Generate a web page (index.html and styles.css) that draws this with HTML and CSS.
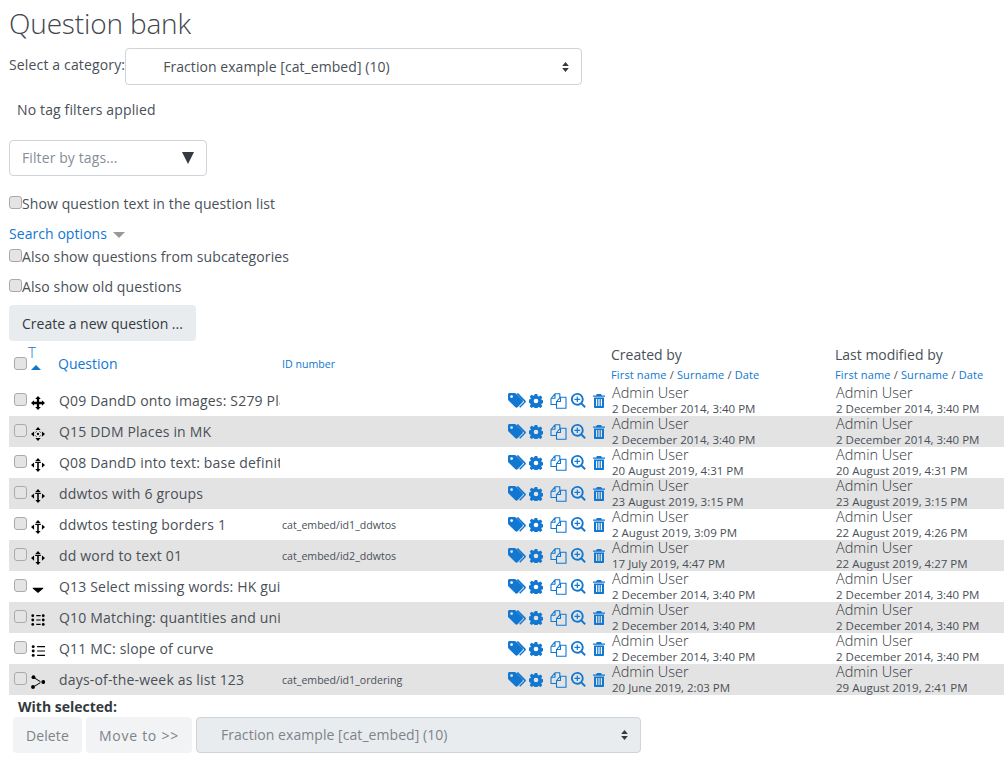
FILE: index.html
```html
<!DOCTYPE html>
<html lang="en">
<head>
<meta charset="utf-8">
<title>Question bank</title>
<link rel="stylesheet" href="styles.css">
</head>
<body>
<svg class="defs" width="0" height="0" aria-hidden="true">
  <symbol id="i-tags" viewBox="0 0 18 16"><path d="M0 1.600C0 .7.7 0 1.600 0h5c.5 0 1 .2 1.300.5l6.600 6.600c.6.6.6 1.600 0 2.200l-4.900 4.900c-.6.6-1.600.6-2.200 0L.5 7.600C.2 7.300 0 6.800 0 6.300z M3.600 2.200a1.400 1.400 0 1 0 0 2.800 1.400 1.400 0 0 0 0-2.800z" fill-rule="evenodd"/><path d="M10 0l7.400 7.400c.6.600.6 1.600 0 2.200l-5.200 5.200-1-1 5-5L8.600 1z"/></symbol>
  <symbol id="i-cog" viewBox="0 0 14 14"><path fill-rule="evenodd" d="M5.700 0h2.600l.4 1.900 1.100.5 1.700-1 1.800 1.800-1 1.700.5 1.100 1.900.4v2.600l-1.900.4-.5 1.100 1 1.700-1.800 1.800-1.700-1-1.100.5-.4 1.900H5.700l-.4-1.900-1.100-.5-1.700 1-1.800-1.800 1-1.700-.5-1.100L-.6 8.300V5.700l1.900-.4.5-1.100-1-1.700L2.600.7l1.700 1 1.100-.5z M7 4.700a2.300 2.300 0 1 0 0 4.600 2.300 2.300 0 0 0 0-4.600z"/></symbol>
  <symbol id="i-copy" viewBox="0 0 17 16"><path fill="none" stroke="currentColor" stroke-width="1.100" stroke-linejoin="round" d="M6.500 11.500H1V5.500L5 .8h4.800v3.400 M5 .8v4.500H1 M6.500 11.500V8.500l4-4.300H16v11H6.500z M10.500 4.200v4.300H6.500"/></symbol>
  <symbol id="i-zoom" viewBox="0 0 15 15"><path fill-rule="evenodd" d="M6.300 0a6.300 6.300 0 0 1 5 10.100l3.500 3.500-1.300 1.300-3.500-3.500A6.300 6.300 0 1 1 6.300 0z M6.300 1.800a4.500 4.500 0 1 0 0 9 4.500 4.500 0 0 0 0-9z"/><path d="M5.700 3.500h1.200v2.200h2.200v1.200H6.900v2.200H5.700V6.900H3.500V5.700h2.200z"/></symbol>
  <symbol id="i-trash" viewBox="0 0 12 14"><path fill-rule="evenodd" d="M4 0h4l1 1.500h3v1.300H0V1.500h3z M1 3.500h10V13c0 .6-.4 1-1 1H2c-.6 0-1-.4-1-1z M3 5v7h1.200V5z M5.400 5v7h1.200V5z M7.800 5v7H9V5z"/></symbol>
  <symbol id="i-move" viewBox="0 0 16 16"><path d="M8 0l3.200 3.500H9.300v3.200h3.200V4.800L16 8l-3.500 3.200V9.300H9.300v3.200h1.900L8 16l-3.200-3.500h1.900V9.300H3.500v1.900L0 8l3.500-3.200v1.900h3.200V3.500H4.800z"/></symbol>
  <symbol id="i-marker" viewBox="0 0 16 16"><path d="M8 0l3 3.500H5zM8 16l-3-3.500h6zM0 8l3.500-3v6zM16 8l-3.500 3V5z"/><circle cx="8" cy="8" r="1.300"/><path d="M5 6.300L6.300 5M11 6.300L9.700 5M5 9.700L6.300 11M11 9.700L9.700 11" stroke="#000" stroke-width="1"/></symbol>
  <symbol id="i-wtos" viewBox="0 0 16 16"><path d="M8 0l3 3.500H5zM8 16l-3-3.500h6zM0 8l3.500-3v6zM16 8l-3.500 3V5z"/><path d="M4.800 4.300h6.400v1.400H8.900v7H7.100v-7H4.800z"/></symbol>
  <symbol id="i-select" viewBox="0 0 16 16"><path d="M2 6.500h12v1L8 12.500l-6-5z"/></symbol>
  <symbol id="i-match" viewBox="0 0 16 16"><circle cx="2" cy="3" r="1.600"/><circle cx="2" cy="8" r="1.600"/><circle cx="2" cy="13" r="1.600"/><circle cx="14" cy="3" r="1.600"/><circle cx="14" cy="8" r="1.600"/><circle cx="14" cy="13" r="1.600"/><path d="M6 2.400h5v1.200H6zM6 7.400h5v1.200H6zM6 12.400h5v1.200H6z"/></symbol>
  <symbol id="i-choice" viewBox="0 0 16 16"><circle cx="2.500" cy="3" r="1.700"/><circle cx="2.500" cy="8" r="1.700"/><circle cx="2.500" cy="13" r="1.700"/><path d="M7 2.400h9v1.200H7zM7 7.400h9v1.200H7zM7 12.400h9v1.200H7z"/></symbol>
  <symbol id="i-order" viewBox="0 0 16 16"><circle cx="2.800" cy="2.500" r="2.200"/><circle cx="2.300" cy="13.700" r="2.200"/><circle cx="14" cy="8" r="2.200"/><path d="M4 2.800l7 4.300-.5.900-7-4.300zM3.500 12.500l7-4.200.5.900-7 4.200z"/></symbol>
  <symbol id="i-updown" viewBox="0 0 8 12"><path d="M4 0l4 4.700H0zM4 12L0 7.300h8z"/></symbol>
</svg>

<main class="page">
  <h1 class="title">Question bank</h1>

  <div class="cat-row">
    <span class="cat-label">Select a category:</span>
    <div class="select cat-select">
      <span>Fraction example [cat_embed] (10)</span>
      <svg class="updown"><use href="#i-updown"/></svg>
    </div>
  </div>

  <p class="no-tags">No tag filters applied</p>

  <div class="tag-filter">
    <span>Filter by tags...</span>
    <span class="tag-caret"></span>
  </div>

  <label class="check-line first"><span class="cb"></span>Show question text in the question list</label>

  <div class="search-options"><a href="#">Search options</a><span class="search-caret"></span></div>
  <label class="check-line sub"><span class="cb"></span>Also show questions from subcategories</label>
  <label class="check-line old"><span class="cb"></span>Also show old questions</label>

  <div class="create-wrap"><button class="btn" type="button">Create a new question ...</button></div>

  <table class="qtable">
    <colgroup>
      <col class="c-check"><col class="c-type"><col class="c-name"><col class="c-id"><col class="c-act"><col class="c-created"><col class="c-mod">
    </colgroup>
    <thead>
      <tr>
        <th class="th-check"><span class="cb"></span></th>
        <th class="th-type"><a href="#">T</a><span class="sort-up"></span></th>
        <th class="th-q"><a href="#">Question</a></th>
        <th class="th-id"><a href="#">ID number</a></th>
        <th></th>
        <th class="th-who"><div class="who-title">Created by</div><div class="who-sub"><a href="#">First name</a> / <a href="#">Surname</a> / <a href="#">Date</a></div></th>
        <th class="th-who"><div class="who-title">Last modified by</div><div class="who-sub"><a href="#">First name</a> / <a href="#">Surname</a> / <a href="#">Date</a></div></th>
      </tr>
    </thead>
    <tbody>
      <tr>
        <td class="t-check"><span class="cb"></span></td><td class="t-type"><svg class="qt"><use href="#i-move"/></svg></td>
        <td class="t-name"><div class="clip">Q09 DandD onto images: S279 Plate tectonics</div></td><td class="t-id"></td>
        <td class="t-act"><div class="acts"><svg class="a-tags"><use href="#i-tags"/></svg><svg class="a-cog"><use href="#i-cog"/></svg><svg class="a-copy"><use href="#i-copy"/></svg><svg class="a-zoom"><use href="#i-zoom"/></svg><svg class="a-trash"><use href="#i-trash"/></svg></div></td>
        <td class="t-who"><div class="who">Admin User</div><div class="when">2 December 2014, 3:40 PM</div></td>
        <td class="t-who"><div class="who">Admin User</div><div class="when">2 December 2014, 3:40 PM</div></td>
      </tr>
      <tr>
        <td class="t-check"><span class="cb"></span></td><td class="t-type"><svg class="qt"><use href="#i-marker"/></svg></td>
        <td class="t-name"><div class="clip">Q15 DDM Places in MK</div></td><td class="t-id"></td>
        <td class="t-act"><div class="acts"><svg class="a-tags"><use href="#i-tags"/></svg><svg class="a-cog"><use href="#i-cog"/></svg><svg class="a-copy"><use href="#i-copy"/></svg><svg class="a-zoom"><use href="#i-zoom"/></svg><svg class="a-trash"><use href="#i-trash"/></svg></div></td>
        <td class="t-who"><div class="who">Admin User</div><div class="when">2 December 2014, 3:40 PM</div></td>
        <td class="t-who"><div class="who">Admin User</div><div class="when">2 December 2014, 3:40 PM</div></td>
      </tr>
      <tr>
        <td class="t-check"><span class="cb"></span></td><td class="t-type"><svg class="qt"><use href="#i-wtos"/></svg></td>
        <td class="t-name"><div class="clip">Q08 DandD into text: base definitions</div></td><td class="t-id"></td>
        <td class="t-act"><div class="acts"><svg class="a-tags"><use href="#i-tags"/></svg><svg class="a-cog"><use href="#i-cog"/></svg><svg class="a-copy"><use href="#i-copy"/></svg><svg class="a-zoom"><use href="#i-zoom"/></svg><svg class="a-trash"><use href="#i-trash"/></svg></div></td>
        <td class="t-who"><div class="who">Admin User</div><div class="when">20 August 2019, 4:31 PM</div></td>
        <td class="t-who"><div class="who">Admin User</div><div class="when">20 August 2019, 4:31 PM</div></td>
      </tr>
      <tr>
        <td class="t-check"><span class="cb"></span></td><td class="t-type"><svg class="qt"><use href="#i-wtos"/></svg></td>
        <td class="t-name"><div class="clip">ddwtos with 6 groups</div></td><td class="t-id"></td>
        <td class="t-act"><div class="acts"><svg class="a-tags"><use href="#i-tags"/></svg><svg class="a-cog"><use href="#i-cog"/></svg><svg class="a-copy"><use href="#i-copy"/></svg><svg class="a-zoom"><use href="#i-zoom"/></svg><svg class="a-trash"><use href="#i-trash"/></svg></div></td>
        <td class="t-who"><div class="who">Admin User</div><div class="when">23 August 2019, 3:15 PM</div></td>
        <td class="t-who"><div class="who">Admin User</div><div class="when">23 August 2019, 3:15 PM</div></td>
      </tr>
      <tr>
        <td class="t-check"><span class="cb"></span></td><td class="t-type"><svg class="qt"><use href="#i-wtos"/></svg></td>
        <td class="t-name"><div class="clip">ddwtos testing borders 1</div></td><td class="t-id">cat_embed/id1_ddwtos</td>
        <td class="t-act"><div class="acts"><svg class="a-tags"><use href="#i-tags"/></svg><svg class="a-cog"><use href="#i-cog"/></svg><svg class="a-copy"><use href="#i-copy"/></svg><svg class="a-zoom"><use href="#i-zoom"/></svg><svg class="a-trash"><use href="#i-trash"/></svg></div></td>
        <td class="t-who"><div class="who">Admin User</div><div class="when">2 August 2019, 3:09 PM</div></td>
        <td class="t-who"><div class="who">Admin User</div><div class="when">22 August 2019, 4:26 PM</div></td>
      </tr>
      <tr>
        <td class="t-check"><span class="cb"></span></td><td class="t-type"><svg class="qt"><use href="#i-wtos"/></svg></td>
        <td class="t-name"><div class="clip">dd word to text 01</div></td><td class="t-id">cat_embed/id2_ddwtos</td>
        <td class="t-act"><div class="acts"><svg class="a-tags"><use href="#i-tags"/></svg><svg class="a-cog"><use href="#i-cog"/></svg><svg class="a-copy"><use href="#i-copy"/></svg><svg class="a-zoom"><use href="#i-zoom"/></svg><svg class="a-trash"><use href="#i-trash"/></svg></div></td>
        <td class="t-who"><div class="who">Admin User</div><div class="when">17 July 2019, 4:47 PM</div></td>
        <td class="t-who"><div class="who">Admin User</div><div class="when">22 August 2019, 4:27 PM</div></td>
      </tr>
      <tr>
        <td class="t-check"><span class="cb"></span></td><td class="t-type"><svg class="qt"><use href="#i-select"/></svg></td>
        <td class="t-name"><div class="clip">Q13 Select missing words: HK guide</div></td><td class="t-id"></td>
        <td class="t-act"><div class="acts"><svg class="a-tags"><use href="#i-tags"/></svg><svg class="a-cog"><use href="#i-cog"/></svg><svg class="a-copy"><use href="#i-copy"/></svg><svg class="a-zoom"><use href="#i-zoom"/></svg><svg class="a-trash"><use href="#i-trash"/></svg></div></td>
        <td class="t-who"><div class="who">Admin User</div><div class="when">2 December 2014, 3:40 PM</div></td>
        <td class="t-who"><div class="who">Admin User</div><div class="when">2 December 2014, 3:40 PM</div></td>
      </tr>
      <tr>
        <td class="t-check"><span class="cb"></span></td><td class="t-type"><svg class="qt"><use href="#i-match"/></svg></td>
        <td class="t-name"><div class="clip">Q10 Matching: quantities and units</div></td><td class="t-id"></td>
        <td class="t-act"><div class="acts"><svg class="a-tags"><use href="#i-tags"/></svg><svg class="a-cog"><use href="#i-cog"/></svg><svg class="a-copy"><use href="#i-copy"/></svg><svg class="a-zoom"><use href="#i-zoom"/></svg><svg class="a-trash"><use href="#i-trash"/></svg></div></td>
        <td class="t-who"><div class="who">Admin User</div><div class="when">2 December 2014, 3:40 PM</div></td>
        <td class="t-who"><div class="who">Admin User</div><div class="when">2 December 2014, 3:40 PM</div></td>
      </tr>
      <tr>
        <td class="t-check"><span class="cb"></span></td><td class="t-type"><svg class="qt"><use href="#i-choice"/></svg></td>
        <td class="t-name"><div class="clip">Q11 MC: slope of curve</div></td><td class="t-id"></td>
        <td class="t-act"><div class="acts"><svg class="a-tags"><use href="#i-tags"/></svg><svg class="a-cog"><use href="#i-cog"/></svg><svg class="a-copy"><use href="#i-copy"/></svg><svg class="a-zoom"><use href="#i-zoom"/></svg><svg class="a-trash"><use href="#i-trash"/></svg></div></td>
        <td class="t-who"><div class="who">Admin User</div><div class="when">2 December 2014, 3:40 PM</div></td>
        <td class="t-who"><div class="who">Admin User</div><div class="when">2 December 2014, 3:40 PM</div></td>
      </tr>
      <tr>
        <td class="t-check"><span class="cb"></span></td><td class="t-type"><svg class="qt"><use href="#i-order"/></svg></td>
        <td class="t-name"><div class="clip">days-of-the-week as list 123</div></td><td class="t-id">cat_embed/id1_ordering</td>
        <td class="t-act"><div class="acts"><svg class="a-tags"><use href="#i-tags"/></svg><svg class="a-cog"><use href="#i-cog"/></svg><svg class="a-copy"><use href="#i-copy"/></svg><svg class="a-zoom"><use href="#i-zoom"/></svg><svg class="a-trash"><use href="#i-trash"/></svg></div></td>
        <td class="t-who"><div class="who">Admin User</div><div class="when">20 June 2019, 2:03 PM</div></td>
        <td class="t-who"><div class="who">Admin User</div><div class="when">29 August 2019, 2:41 PM</div></td>
      </tr>
    </tbody>
  </table>

  <div class="with-selected">
    <strong>With selected:</strong>
    <div class="bulk">
      <button class="btn btn-off" type="button">Delete</button>
      <button class="btn btn-off btn-move" type="button">Move to &gt;&gt;</button>
      <div class="select bulk-select">
        <span>Fraction example [cat_embed] (10)</span>
        <svg class="updown"><use href="#i-updown"/></svg>
      </div>
    </div>
  </div>
</main>
</body>
</html>
```

FILE: styles.css
```css
* { box-sizing: border-box; }
html, body { margin: 0; padding: 0; height: 768px; overflow: hidden; background: #fff; }
body { font-family: "Open Sans", "Noto Sans", sans-serif; font-size: 14px; color: #495057; line-height: 20px; }
a { color: #1177d1; text-decoration: none; }
.defs { position: absolute; }
.page { padding: 0 0 0 9px; width: 1004px; }

.title { margin: 0; padding-top: 5px; font-size: 28px; font-weight: 300; line-height: 36px; letter-spacing: -.15px; color: #3f454b; }

.cat-row { display: flex; align-items: center; margin-top: 7px; height: 37px; }
.cat-label { margin-top: -3px; letter-spacing: .15px; }
.select { display: flex; align-items: center; justify-content: space-between; height: 37px; border: 1px solid #ced4da; border-radius: 4px; padding: 0 12px 0 37px; background: #fff; letter-spacing: .06px; }
.cat-select { width: 457px; }
.updown { width: 7px; height: 10px; fill: #343a40; }

.no-tags { margin: 15px 0 0 8px; letter-spacing: .14px; }

.tag-filter { display: flex; align-items: center; justify-content: space-between; width: 198px; height: 36px; margin-top: 20px; padding: 0 12px; border: 1px solid #ced4da; border-radius: 4px; color: #868e96; letter-spacing: .1px; }
.tag-caret { width: 0; height: 0; border-left: 6px solid transparent; border-right: 6px solid transparent; border-top: 12px solid #343a40; }

.check-line { display: flex; align-items: center; height: 20px; letter-spacing: .1px; }
.check-line .cb { margin-top: -4px; }
.first { margin-top: 18px; }
.search-options { display: flex; align-items: center; margin-top: 10px; height: 20px; letter-spacing: .06px; }
.search-caret { width: 0; height: 0; margin-left: 6px; margin-top: 2px; border-left: 6px solid transparent; border-right: 6px solid transparent; border-top: 6px solid #999; }
.sub { margin-top: 3px; }
.old { margin-top: 10px; }

.cb { display: inline-block; flex: none; width: 13px; height: 13px; border: 1px solid #aaa; border-radius: 3px; background: #e4e4e4; }

.create-wrap { margin-top: 8px; }
.btn { display: inline-block; height: 36px; padding: 1px 13px 0; border: 0; border-radius: 4px; background: #e9ecef; color: #343a40; font: inherit; }
.btn-off { background: #f1f3f5; color: #7d8388; letter-spacing: .1px; }
.btn-move { letter-spacing: .75px; }

.qtable { table-layout: fixed; border-collapse: collapse; width: 995px; margin-top: 0; }
.c-check { width: 19px; }
.c-type { width: 30px; }
.c-name { width: 223px; }
.c-id { width: 226px; }
.c-act { width: 104px; }
.c-created { width: 224px; }
.c-mod { width: 169px; }
.qtable th, .qtable td { padding: 0; text-align: left; font-weight: 400; vertical-align: middle; white-space: nowrap; }
thead tr { height: 44px; }
.qtable th { padding-top: 2px; }
.qtable .th-check { padding: 0 0 0 5px; }
.th-check .cb { display: block; margin-top: 0; }
.th-type a { display: block; margin: -16px 0 0 0; font-size: 15px; font-weight: 300; line-height: 18px; }
.sort-up { display: block; width: 0; height: 0; margin: 4px 0 0 3px; border-left: 5px solid transparent; border-right: 5px solid transparent; border-bottom: 5px solid #1177d1; }
.qtable .th-id { padding-left: 1px; padding-bottom: 2px; }
.th-id a { font-size: 10.600px; }
.qtable .th-who { padding-top: 4px; }
.who-title { line-height: 20px; }
.who-sub { font-size: 11px; line-height: 20px; letter-spacing: .15px; }
.who-sub a { font-size: 11px; }

tbody tr { height: 31px; }
tbody tr:nth-child(even) td { background: #e3e3e3; }
.qtable .t-check { padding-left: 5px; }
.t-check .cb { display: block; margin-top: -3px; }
.qtable .t-type { padding-top: 1px; }
.qt { display: block; width: 14px; height: 14px; fill: #000; margin-left: 3px; margin-top: 3px; }
.qtable .t-name { padding-left: 1px; }
.clip { overflow: hidden; width: 221px; letter-spacing: .18px; }
.qtable .t-id { font-size: 10.600px; padding-left: 1px; color: #495057; }
.acts { display: flex; align-items: center; color: #1177d1; fill: #1177d1; height: 31px; }
.acts svg { display: block; flex: none; color: #1177d1; fill: #1177d1; }
.a-tags { width: 18px; height: 16px; margin-left: 1px; }
.a-cog { width: 14px; height: 14px; margin-left: 3px; }
.acts .a-copy { width: 17px; height: 16px; margin-left: 7px; fill: none; }
.a-zoom { width: 15px; height: 15px; margin-left: 4px; }
.a-trash { width: 12px; height: 14px; margin-left: 7px; }
.qtable .t-who { padding-left: 1px; vertical-align: top; }
.who { font-size: 14.500px; font-weight: 300; line-height: 16px; color: #33383d; }
.when { font-size: 11.500px; line-height: 15px; }

.with-selected { padding-left: 4px; margin-top: 3px; }
.with-selected strong { display: block; padding-left: 5px; font-weight: 700; color: #343a40; line-height: 18px; }
.bulk { display: flex; gap: 4px; margin-top: 1px; }
.bulk-select { width: 445px; height: 36px; background: #e9ecef; color: #7d8388; padding-left: 24px; }
```
